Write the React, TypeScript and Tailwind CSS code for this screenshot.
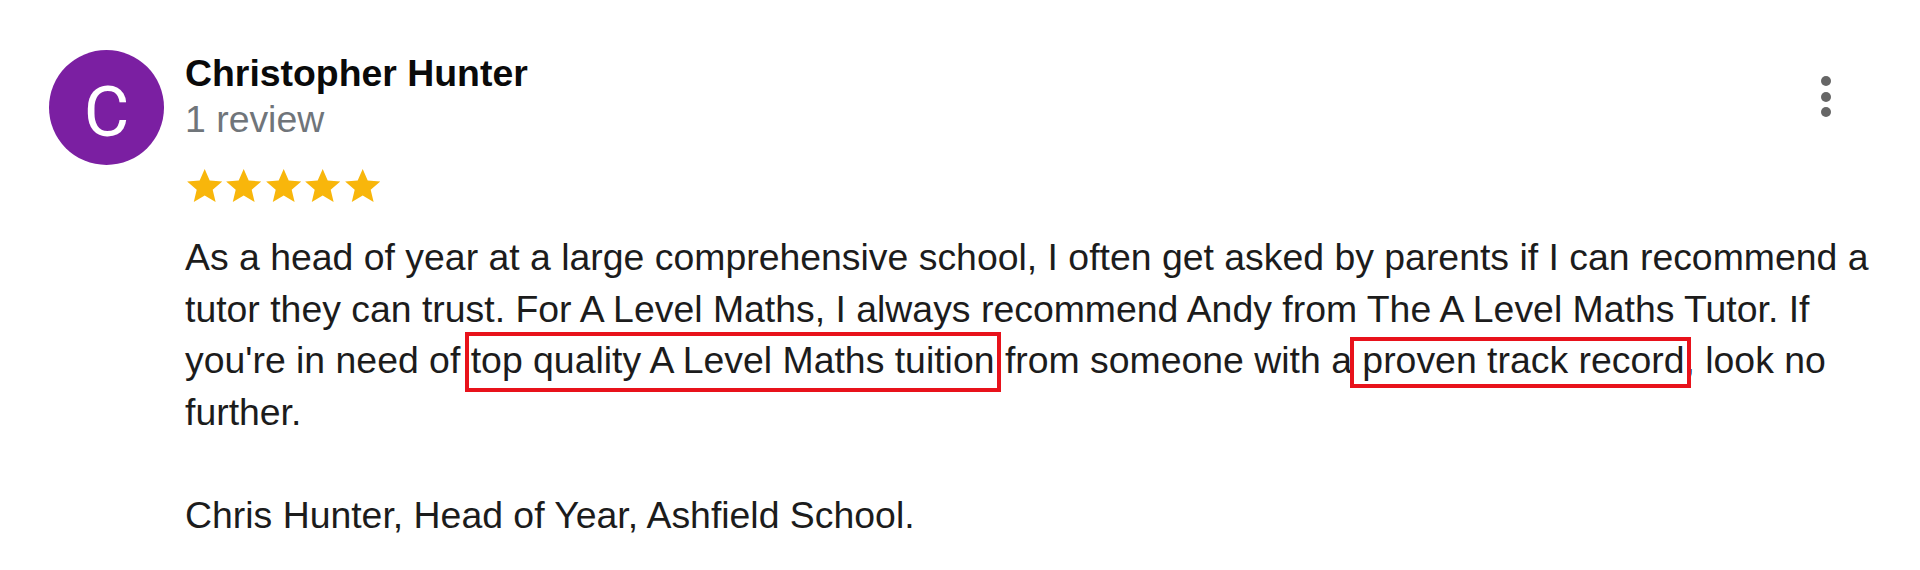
import React from 'react';

const Star: React.FC = () => (
  <svg viewBox="0 0 24 24" className="h-[40px] w-[39.4px]" aria-hidden="true">
    <path
      fill="#f8b60b"
      d="M12 1.6l3.05 7.05 7.65.6-5.83 5 1.78 7.45L12 17.72 5.35 21.7l1.78-7.45-5.83-5 7.65-.6z"
    />
  </svg>
);

// annotation box drawn over part of the review text
const Marked: React.FC<{ children: React.ReactNode; box: string }> = ({ children, box }) => (
  <span className="relative">
    {children}
    <span className={`pointer-events-none absolute border-4 border-[#e8121b] ${box}`} />
  </span>
);

const App: React.FC = () => {
  return (
    <div
      className="min-h-[570px] w-[1920px] bg-white pl-[49px] pt-[50px] text-[#1c1c1c]"
      style={{ fontFamily: '"Liberation Sans", Arial, sans-serif' }}
    >
      <div className="flex gap-[21px]">
        {/* avatar */}
        <div className="flex h-[115px] w-[115px] shrink-0 items-center justify-center rounded-full bg-[#7b1fa2]">
          <span
            className="pt-[9px] text-[70px] leading-none text-white"
            style={{ fontFamily: 'Roboto, "Liberation Sans", sans-serif' }}
          >
            C
          </span>
        </div>

        <div className="w-[1700px]">
          {/* header */}
          <div className="flex items-start justify-between">
            <div>
              <div className="text-[37.4px] font-bold leading-[46px] text-[#0a0a0a]">Christopher Hunter</div>
              <div className="text-[37.4px] leading-[46px] text-[#70757a]">1 review</div>
            </div>
            <button
              type="button"
              className="mr-[50px] mt-[22px] flex flex-col items-center gap-[5.5px] p-1"
              aria-label="More options"
            >
              <span className="h-[10px] w-[10px] rounded-full bg-[#666]" />
              <span className="h-[10px] w-[10px] rounded-full bg-[#666]" />
              <span className="h-[10px] w-[10px] rounded-full bg-[#666]" />
            </button>
          </div>

          {/* rating */}
          <div className="mt-[24px] flex">
            <Star />
            <Star />
            <Star />
            <Star />
            <Star />
          </div>

          {/* review body */}
          <div className="mt-[26px] pr-[10px] text-[37.4px] leading-[51.5px]">
            <p>
              As a head of year at a large comprehensive school, I often get asked by parents if I can
              recommend a tutor they can trust. For A Level Maths, I always recommend Andy from The A Level
              Maths Tutor. If you're in need of{' '}
              <Marked box="-left-[6px] -right-[6px] -top-[7px] -bottom-[11px]">
                top quality A Level Maths tuition
              </Marked>{' '}
              from someone with a{' '}
              <Marked box="-left-[12px] -right-[7px] -top-[2px] -bottom-[7px]">proven track record</Marked>
              , look no further.
            </p>
            <p className="mt-[51.5px]">Chris Hunter, Head of Year, Ashfield School.</p>
          </div>
        </div>
      </div>
    </div>
  );
};

export default App;
